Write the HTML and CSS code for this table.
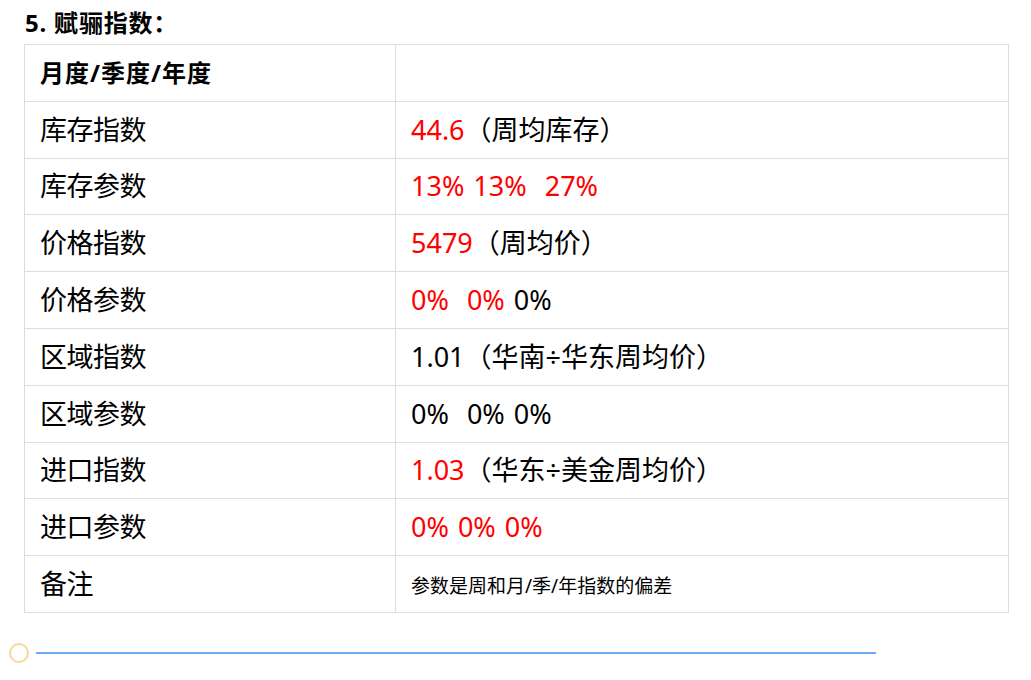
FILE: index.html
```html
<!DOCTYPE html>
<html lang="zh-CN">
<head>
<meta charset="utf-8">
<title>赋骊指数</title>
<link rel="stylesheet" href="styles.css">
</head>
<body>
<div class="page">
  <h2 class="title">5. 赋骊指数：</h2>
  <table class="grid">
    <tr class="head"><td class="c1">月度/季度/年度</td><td class="c2"></td></tr>
    <tr><td class="c1">库存指数</td><td class="c2"><span class="red">44.6</span>（周均库存）</td></tr>
    <tr><td class="c1">库存参数</td><td class="c2"><span class="red">13% 13%&nbsp; 27%</span></td></tr>
    <tr><td class="c1">价格指数</td><td class="c2"><span class="red">5479</span>（周均价）</td></tr>
    <tr><td class="c1">价格参数</td><td class="c2"><span class="red">0%&nbsp; 0%</span> 0%</td></tr>
    <tr><td class="c1">区域指数</td><td class="c2">1.01（华南÷华东周均价）</td></tr>
    <tr><td class="c1">区域参数</td><td class="c2">0%&nbsp; 0% 0%</td></tr>
    <tr><td class="c1">进口指数</td><td class="c2"><span class="red">1.03</span>（华东÷美金周均价）</td></tr>
    <tr><td class="c1">进口参数</td><td class="c2"><span class="red">0% 0% 0%</span></td></tr>
    <tr><td class="c1">备注</td><td class="c2 note">参数是周和月/季/年指数的偏差</td></tr>
  </table>
  <div class="divider">
    <span class="ring"></span>
    <span class="rule"></span>
  </div>
</div>
</body>
</html>
```
FILE: styles.css
```css
html, body {
  margin: 0;
  padding: 0;
  background: #ffffff;
}
body {
  font-family: "Noto Sans", "Noto Sans CJK SC", sans-serif;
  color: #000000;
}
.page {
  padding: 6px 22px 0 24px;
}
.title {
  margin: 0;
  padding-left: 1px;
  font-size: 24px;
  line-height: 34px;
  font-weight: 700;
  height: 38px;
  letter-spacing: 0.8px;
}
.grid {
  width: 985px;
  border-collapse: collapse;
  table-layout: fixed;
}
.grid td {
  border: 1px solid #dddddd;
  height: 56.8px;
  padding: 0 15px;
  font-size: 27px;
  line-height: 30px;
  vertical-align: middle;
  box-sizing: border-box;
}
.grid td.c1 {
  width: 371px;
  letter-spacing: -0.5px;
}
.grid td.c2 {
  word-spacing: 2px;
}
.grid tr.head td.c1 {
  font-size: 24px;
  font-weight: 700;
  letter-spacing: 1px;
}
.grid td.note {
  font-size: 19px;
  padding-top: 4px;
  word-spacing: 0;
}
.red {
  color: #ff0000;
}
.divider {
  display: flex;
  align-items: center;
  gap: 7px;
  height: 20px;
  margin-top: 30px;
  margin-left: -15px;
}
.ring {
  width: 16px;
  height: 16px;
  border: 2px solid #fdd597;
  border-radius: 50%;
  flex: none;
}
.rule {
  width: 840px;
  height: 2px;
  background: #6aabf3;
  flex: none;
}
```
